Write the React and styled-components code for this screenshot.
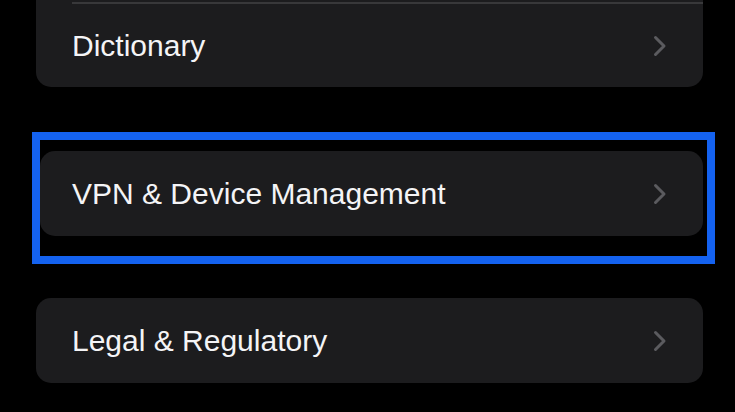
import React from 'react'
import styled, { createGlobalStyle } from 'styled-components'

const GlobalStyle = createGlobalStyle`
    html, body {
        margin: 0;
        padding: 0;
        background: #000;
        overflow: hidden;
    }
`

function Chevron() {
    return (
        <ChevronIcon viewBox="0 0 14 22" width="14" height="22">
            <path d="M2.5 2.5 L11 11 L2.5 19.5" fill="none" stroke="#5b5b5f" strokeWidth="3" strokeLinecap="round" strokeLinejoin="round" />
        </ChevronIcon>
    )
}

function Row({ label, divider, indent }) {
    return (
        <RowItem divider={divider} indent={indent}>
            <Label>{label}</Label>
            {label ? <Chevron /> : null}
        </RowItem>
    )
}

export default function App() {
    return (
        <Page>
            <GlobalStyle />
            <Group offset={-83}>
                <Row />
                <Row label="Dictionary" divider />
            </Group>
            <Highlight>
                <Group>
                    <Row label="VPN & Device Management" indent={32} />
                </Group>
            </Highlight>
            <Group>
                <Row label="Legal & Regulatory" />
            </Group>
        </Page>
    )
}

const Page = styled.div`
    width: 735px;
    height: 412px;
    box-sizing: border-box;
    padding: 0 32px 0 36px;
    display: flex;
    flex-direction: column;
    font-family: "Liberation Sans", Arial, sans-serif;
`

const Group = styled.div`
    margin-top: ${props => props.offset || 0}px;
    background: #1c1c1e;
    border-radius: 15px;
    overflow: hidden;
    flex-shrink: 0;
`

const RowItem = styled.div`
    height: 85px;
    display: flex;
    align-items: center;
    justify-content: space-between;
    padding: 0 36px 0 ${props => props.divider ? 0 : (props.indent || 36)}px;
    box-sizing: border-box;
    border-top: ${props => props.divider ? "2px solid #38383a" : "none"};
    margin-left: ${props => props.divider ? "36px" : "0"};
`

const Label = styled.span`
    color: #f4f4f6;
    font-size: 30px;
    padding-top: 1px;
`

const ChevronIcon = styled.svg`
    display: block;
`

const Highlight = styled.div`
    margin: 45px -12px 34px -4px;
    border: 8px solid #1462f0;
    padding: 11px 4px 20px 0;
`
